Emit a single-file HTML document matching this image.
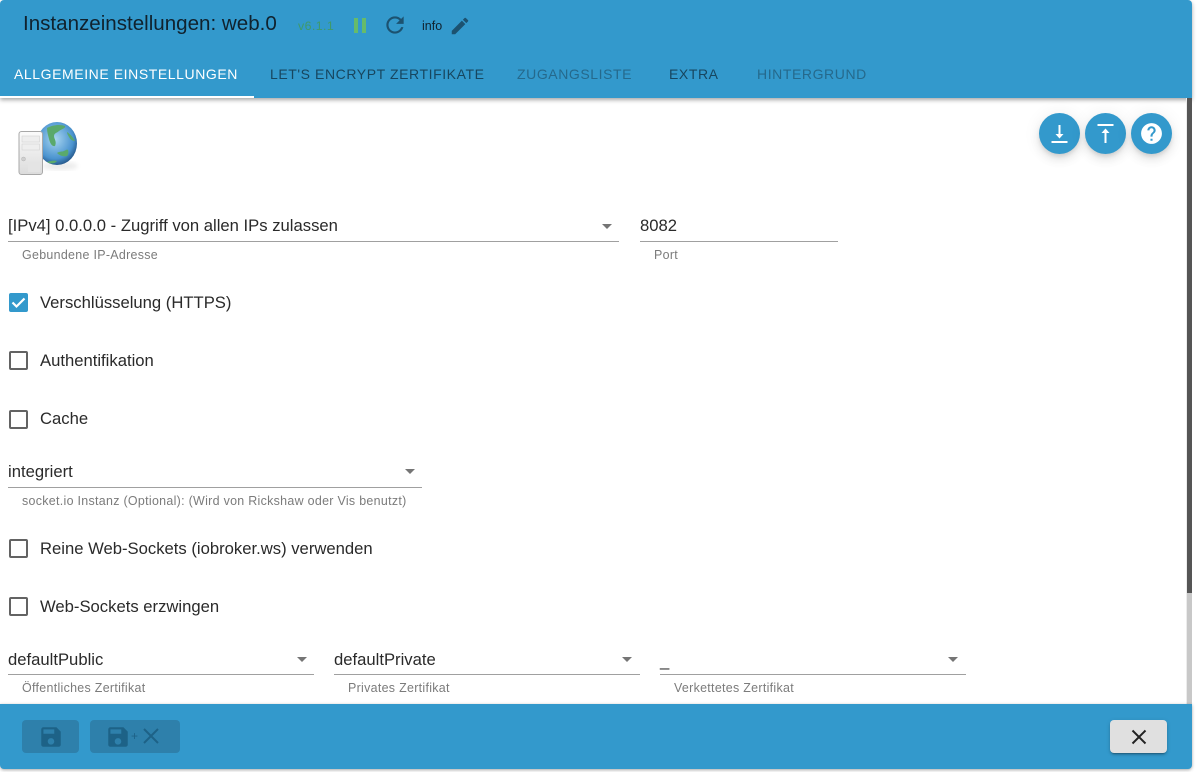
<!DOCTYPE html>
<html><head><meta charset="utf-8"><style>
html,body{margin:0;padding:0;background:#fff;width:1200px;height:772px;overflow:hidden;font-family:"Liberation Sans",sans-serif;color:#222}
.a{position:absolute;white-space:nowrap}
.line{position:absolute;height:1px;background:#a0a0a0}
.t{font-size:16.65px;line-height:20px;color:#2a2a2a;position:absolute;white-space:nowrap;margin-top:1px}
.h{font-size:12.45px;line-height:14px;color:#7b7b7b;letter-spacing:.3px;position:absolute;white-space:nowrap}
.arr{position:absolute;width:0;height:0;border-left:5px solid transparent;border-right:5px solid transparent;border-top:5px solid #757575}
.cb{position:absolute;left:9px;width:15px;height:15px;border:2px solid #636363;border-radius:2px}
.tab{position:absolute;top:66px;font-size:14px;line-height:16px;letter-spacing:.58px;white-space:nowrap}
.fab{position:absolute;top:113px;width:41px;height:41px;border-radius:50%;background:#3399cc;box-shadow:0 3px 5px -1px rgba(0,0,0,.12),0 6px 10px 0 rgba(0,0,0,.08),0 1px 18px 0 rgba(0,0,0,.07)}
</style></head><body>
<div class="a" style="left:0;top:0;width:1192px;height:98px;background:#3399cc;border-radius:4px 4px 0 0;box-shadow:0 2px 4px rgba(0,0,0,.35)"></div>
<div class="a" style="left:23px;top:11px;font-size:20.57px;line-height:26px;color:#10222e">Instanzeinstellungen: web.0</div>
<div class="a" style="left:298px;top:19px;font-size:12.4px;line-height:14px;letter-spacing:.4px;color:#3f9a6a">v6.1.1</div>
<div class="a" style="left:354px;top:18px;width:4px;height:15px;background:#66bb6a"></div>
<div class="a" style="left:362px;top:18px;width:4px;height:15px;background:#66bb6a"></div>
<svg class="a" style="left:382px;top:12px" width="26" height="26" viewBox="0 0 24 24"><path fill="#1c5270" d="M17.65 6.35C16.2 4.9 14.21 4 12 4c-4.42 0-7.99 3.58-7.99 8s3.57 8 7.99 8c3.73 0 6.84-2.55 7.73-6h-2.08c-.82 2.33-3.04 4-5.65 4-3.31 0-6-2.69-6-6s2.69-6 6-6c1.66 0 3.14.69 4.22 1.78L13 11h7V4l-2.35 2.35z"/></svg>
<div class="a" style="left:422px;top:19px;font-size:12.5px;line-height:14px;color:#10222e">info</div>
<svg class="a" style="left:449px;top:15px" width="22" height="22" viewBox="0 0 24 24"><path fill="#1c5270" d="M3 17.25V21h3.75L17.81 9.94l-3.75-3.75L3 17.25zM20.71 7.04c.39-.39.39-1.02 0-1.41l-2.34-2.34c-.39-.39-1.02-.39-1.41 0l-1.83 1.83 3.75 3.75 1.83-1.83z"/></svg>

<div class="tab" style="left:14px;color:#fff">ALLGEMEINE EINSTELLUNGEN</div>
<div class="a" style="left:0;top:96px;width:254px;height:2px;background:#fff"></div>
<div class="tab" style="left:270px;color:#17465f">LET'S ENCRYPT ZERTIFIKATE</div>
<div class="tab" style="left:517px;color:#25698c">ZUGANGSLISTE</div>
<div class="tab" style="left:669px;color:#17465f">EXTRA</div>
<div class="tab" style="left:757px;color:#25698c">HINTERGRUND</div>

<div class="a" style="left:1186px;top:98px;width:1px;height:606px;background:#ececec"></div>
<div class="a" style="left:1187px;top:98px;width:5px;height:495px;background:#555"></div>
<div class="a" style="left:1187px;top:593px;width:5px;height:111px;background:#c8c8c8"></div>

<svg class="a" style="left:16px;top:120px" width="66" height="60" viewBox="0 0 66 60">
<defs><radialGradient id="g" cx=".45" cy=".4" r=".65"><stop offset="0" stop-color="#a9d6f0"/><stop offset=".7" stop-color="#4a93cf"/><stop offset="1" stop-color="#1d4a7a"/></radialGradient><linearGradient id="s" x1="0" y1="0" x2="0" y2="1"><stop offset="0" stop-color="#fbfbfb"/><stop offset="1" stop-color="#dcdcdc"/></linearGradient><filter id="b"><feGaussianBlur stdDeviation="2.5"/></filter></defs>
<ellipse cx="44" cy="46" rx="18" ry="4" fill="#000" opacity=".08" filter="url(#b)"/>
<ellipse cx="41" cy="23.500" rx="20" ry="21.500" fill="url(#g)"/>
<path fill="#5aa96c" d="M31 8c5-3 13-4 18-2 1 2-3 3-6 5-2 2-5 2-5 5 0 3 3 5 1 10-3 1-5-3-6-7-1-4-2-7-2-11zM41 33c3-2 5-1 7-2s3-2 4-1c1 2 0 5-1 6-3 1-7 0-10-3zM31 42c3-1 7-2 10-1-2 3-7 3-10 1zM51 12c3 2 6 5 8 9-3 0-5-2-6-4s-2-3-2-5z"/>
<rect x="3" y="11.500" width="23.500" height="43" rx="2.500" fill="url(#s)" stroke="#a8a8a8"/>
<rect x="6" y="16" width="17.500" height="6" fill="#eee" stroke="#d2d2d2" stroke-width=".6"/>
<rect x="6" y="24" width="17.500" height="6" fill="#eee" stroke="#d2d2d2" stroke-width=".6"/>
<circle cx="7.500" cy="39" r="2" fill="#cfcfcf" stroke="#b5b5b5" stroke-width=".5"/>
<rect x="12" y="42" width="12" height="10" fill="#e4e4e4"/>
</svg>

<div class="fab" style="left:1039px"><svg style="position:absolute;left:8px;top:8px" width="25" height="25" viewBox="0 0 25 25"><path fill="none" stroke="#fff" stroke-width="2" d="M12.500 4v11"/><path fill="#fff" d="M8.500 13h8l-4 4.500z"/><path fill="none" stroke="#fff" stroke-width="2" d="M4.500 21h16"/></svg></div>
<div class="fab" style="left:1085px"><svg style="position:absolute;left:8px;top:8px" width="25" height="25" viewBox="0 0 25 25"><path fill="none" stroke="#fff" stroke-width="2" d="M4.500 4h16M12.500 10v12"/><path fill="#fff" d="M8.500 12h8l-4-4.500z"/></svg></div>
<div class="fab" style="left:1131px"><svg style="position:absolute;left:8px;top:8px" width="25" height="25" viewBox="0 0 24 24"><path fill="#fff" d="M12 2C6.480 2 2 6.480 2 12s4.480 10 10 10 10-4.480 10-10S17.520 2 12 2zm1 17h-2v-2h2v2zm2.070-7.750l-.9.920C13.450 12.900 13 13.500 13 15h-2v-.5c0-1.100.450-2.100 1.170-2.830l1.240-1.260c.370-.360.590-.860.590-1.410 0-1.100-.900-2-2-2s-2 .900-2 2H8c0-2.210 1.790-4 4-4s4 1.790 4 4c0 .880-.360 1.680-.930 2.250z"/></svg></div>

<div class="t" style="left:8px;top:215px">[IPv4] 0.0.0.0 - Zugriff von allen IPs zulassen</div>
<div class="arr" style="left:602px;top:224px"></div>
<div class="line" style="left:8px;top:241px;width:611px"></div>
<div class="h" style="left:22px;top:248px">Gebundene IP-Adresse</div>
<div class="t" style="left:640px;top:215px">8082</div>
<div class="line" style="left:640px;top:241px;width:198px"></div>
<div class="h" style="left:654px;top:248px">Port</div>

<div class="cb" style="top:293px;background:#3399cc;border-color:#3399cc"><svg style="position:absolute;left:-2px;top:-2px" width="19" height="19" viewBox="0 0 19 19"><path fill="none" stroke="#fff" stroke-width="2.200" d="M3.500 9.500l4 4 8-8"/></svg></div>
<div class="t" style="left:40px;top:291.500px">Verschlüsselung (HTTPS)</div>
<div class="cb" style="top:351px"></div>
<div class="t" style="left:40px;top:349.500px">Authentifikation</div>
<div class="cb" style="top:410px"></div>
<div class="t" style="left:40px;top:408px">Cache</div>

<div class="t" style="left:8px;top:461px">integriert</div>
<div class="arr" style="left:405px;top:469px"></div>
<div class="line" style="left:8px;top:487px;width:414px"></div>
<div class="h" style="left:22px;top:494px">socket.io Instanz (Optional): (Wird von Rickshaw oder Vis benutzt)</div>

<div class="cb" style="top:539px"></div>
<div class="t" style="left:40px;top:538px">Reine Web-Sockets (iobroker.ws) verwenden</div>
<div class="cb" style="top:597px"></div>
<div class="t" style="left:40px;top:596px">Web-Sockets erzwingen</div>

<div class="t" style="left:8px;top:649px">defaultPublic</div>
<div class="arr" style="left:297px;top:657px"></div>
<div class="line" style="left:8px;top:674px;width:306px"></div>
<div class="h" style="left:22px;top:681px">Öffentliches Zertifikat</div>
<div class="t" style="left:334px;top:649px">defaultPrivate</div>
<div class="arr" style="left:622px;top:657px"></div>
<div class="line" style="left:334px;top:674px;width:306px"></div>
<div class="h" style="left:348px;top:681px">Privates Zertifikat</div>
<div class="t" style="left:660px;top:650px">_</div>
<div class="arr" style="left:948px;top:657px"></div>
<div class="line" style="left:660px;top:674px;width:306px"></div>
<div class="h" style="left:674px;top:681px">Verkettetes Zertifikat</div>

<div class="a" style="left:0;top:704px;width:1192px;height:65px;background:#3399cc;border-radius:0 0 4px 4px;box-shadow:0 1px 3px rgba(0,0,0,.35)"></div>
<div class="a" style="left:22px;top:720px;width:57px;height:33px;background:#2e80ab;border-radius:4px"></div>
<svg class="a" style="left:38px;top:724px" width="26" height="26" viewBox="0 0 24 24"><path fill="#1d6287" d="M17 3H5c-1.110 0-2 .900-2 2v14c0 1.100.890 2 2 2h14c1.100 0 2-.900 2-2V7l-4-4zm-5 16c-1.660 0-3-1.340-3-3s1.340-3 3-3 3 1.340 3 3-1.340 3-3 3zm3-10H5V5h10v4z"/></svg>
<div class="a" style="left:90px;top:720px;width:90px;height:33px;background:#2e80ab;border-radius:4px"></div>
<svg class="a" style="left:105px;top:724px" width="26" height="26" viewBox="0 0 24 24"><path fill="#1d6287" d="M17 3H5c-1.110 0-2 .900-2 2v14c0 1.100.890 2 2 2h14c1.100 0 2-.900 2-2V7l-4-4zm-5 16c-1.660 0-3-1.340-3-3s1.340-3 3-3 3 1.340 3 3-1.340 3-3 3zm3-10H5V5h10v4z"/></svg>
<div class="a" style="left:131px;top:729px;font-size:12px;line-height:14px;color:#1d6287">+</div>
<svg class="a" style="left:139px;top:724px" width="24" height="24" viewBox="0 0 24 24"><path fill="none" stroke="#1d6287" stroke-width="2" d="M5 5l14 14M19 5L5 19"/></svg>
<div class="a" style="left:1110px;top:720px;width:57px;height:33px;background:#e0e0e0;border-radius:4px;box-shadow:0 3px 1px -2px rgba(0,0,0,.2),0 2px 2px 0 rgba(0,0,0,.14),0 1px 5px 0 rgba(0,0,0,.12)"></div>
<svg class="a" style="left:1127px;top:725px" width="24" height="24" viewBox="0 0 24 24"><path fill="none" stroke="#222" stroke-width="2" d="M5.500 5.500l13 13M18.500 5.500l-13 13"/></svg>
</body></html>
